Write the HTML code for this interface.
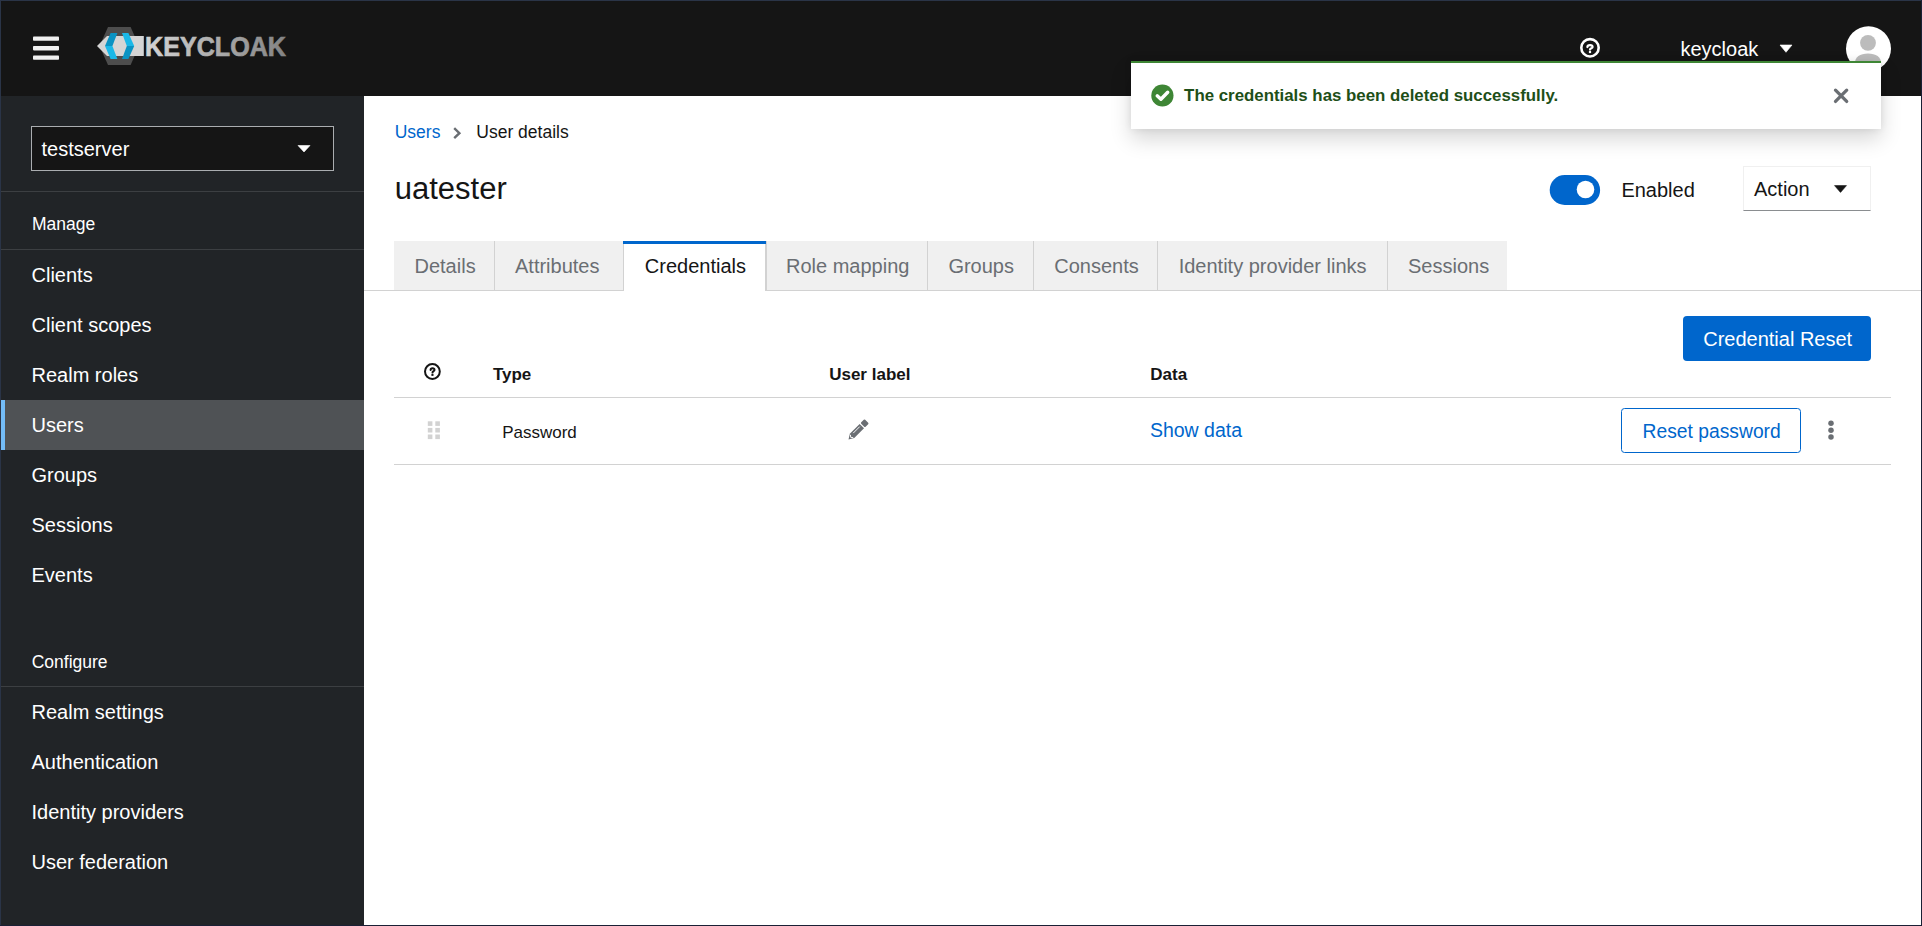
<!DOCTYPE html>
<html><head><meta charset="utf-8"><title>Keycloak</title>
<style>
html,body{margin:0;padding:0;}
body{width:1922px;height:926px;position:relative;overflow:hidden;background:#fff;font-family:"Liberation Sans", sans-serif;}
.t{position:absolute;white-space:nowrap;line-height:1;}
.r{position:absolute;}
.s{position:absolute;overflow:visible;}
</style></head><body>
<div class="r" style="left:0px;top:0px;width:1922px;height:96px;background:#151515;"></div>
<svg class="s" style="left:28px;top:30px;" width="36" height="36" viewBox="0 0 36 36"><rect x="5" y="6.4" width="26" height="4.4" rx="0.8" fill="#f0f0f0"/><rect x="5" y="16.0" width="26" height="4.4" rx="0.8" fill="#f0f0f0"/><rect x="5" y="25.4" width="26" height="4.4" rx="0.8" fill="#f0f0f0"/></svg>
<svg class="s" style="left:90px;top:20px;" width="200" height="52" viewBox="0 0 200 52">
<defs>
<linearGradient id="kg" x1="0" y1="0" x2="1" y2="0">
<stop offset="0" stop-color="#d4d4d4"/><stop offset="0.5" stop-color="#acacac"/><stop offset="1" stop-color="#838383"/>
</linearGradient>
</defs>
<polygon points="18,7 40.6,7 49,26 40.6,45 18,45 9.6,26" fill="#4d4d4d"/>
<polygon points="7,26 17,16 53.8,16 53.8,36 17,36" fill="#d5d5d5"/>
<polygon points="20.6,13 27.4,13 22.4,26 15,26" fill="#0a93c3"/>
<polygon points="15,26 22.4,26 27.4,39 20.6,39" fill="#1ab8e8"/>
<polygon points="32,13 38.4,13 44.2,26 36.8,26" fill="#1ab8e8"/>
<polygon points="36.8,26 44.2,26 38.4,39 32,39" fill="#0a93c3"/>
<text x="55" y="35.8" font-family="Liberation Sans" font-weight="700" font-size="27" fill="url(#kg)" stroke="url(#kg)" stroke-width="0.7" textLength="141" lengthAdjust="spacingAndGlyphs">KEYCLOAK</text>
</svg>
<svg class="s" style="left:1578px;top:36px;" width="24" height="24" viewBox="0 0 24 24"><circle cx="12" cy="11.8" r="8.7" fill="none" stroke="#fff" stroke-width="2.6"/>
<path d="M9.4 11.1 C9.4 8.4 14.6 8.4 14.6 11.1 C14.6 12.3 12 12.3 12 13.6" fill="none" stroke="#fff" stroke-width="2.2" stroke-linecap="round"/>
<rect x="10.9" y="14.9" width="2.2" height="2.2" fill="#fff"/></svg>
<div class="t" style="left:1680.50px;top:38.77px;font-size:20px;color:#fff;font-weight:400;">keycloak</div>
<svg class="s" style="left:1778px;top:43px;" width="16" height="12" viewBox="0 0 16 12"><path d="M2 2 L14 2 L8 9.3 Z" fill="#fff" stroke="#fff" stroke-width="0.6" stroke-linejoin="round"/></svg>
<svg class="s" style="left:1844px;top:24px;" width="50" height="50" viewBox="0 0 50 50"><defs><clipPath id="ac"><circle cx="24.5" cy="24.7" r="22.5"/></clipPath></defs>
<circle cx="24.5" cy="24.7" r="22.5" fill="#fff"/>
<g clip-path="url(#ac)"><circle cx="24" cy="18.8" r="7.9" fill="#bcbcbc"/>
<path d="M10.8 50 L10.8 40 C10.8 33 16 29.6 24 29.6 C32 29.6 37.2 33 37.2 40 L37.2 50 Z" fill="#bcbcbc"/></g></svg>
<div class="r" style="left:0px;top:96px;width:364px;height:830px;background:#212427;"></div>
<div class="r" style="left:31px;top:126px;width:303px;height:45px;background:#151515;box-sizing:border-box;border:1px solid #aaadb0;"></div>
<div class="t" style="left:41.50px;top:139.07px;font-size:20px;color:#fff;font-weight:400;">testserver</div>
<svg class="s" style="left:296px;top:143px;" width="16" height="12" viewBox="0 0 16 12"><path d="M2 2.5 L14 2.5 L8 9 Z" fill="#fff" stroke="#fff" stroke-width="0.6" stroke-linejoin="round"/></svg>
<div class="r" style="left:0px;top:191px;width:364px;height:1px;background:#3c3f42;"></div>
<div class="t" style="left:31.90px;top:216.49px;font-size:17.5px;color:#fff;font-weight:400;">Manage</div>
<div class="r" style="left:0px;top:249px;width:364px;height:1px;background:#3c3f42;"></div>
<div class="r" style="left:1px;top:400px;width:363px;height:50px;background:#4f5255;"></div>
<div class="r" style="left:1px;top:400px;width:4px;height:50px;background:#73bcf7;"></div>
<div class="t" style="left:31.50px;top:265.07px;font-size:20px;color:#fff;font-weight:400;">Clients</div>
<div class="t" style="left:31.50px;top:315.07px;font-size:20px;color:#fff;font-weight:400;">Client scopes</div>
<div class="t" style="left:31.50px;top:365.07px;font-size:20px;color:#fff;font-weight:400;">Realm roles</div>
<div class="t" style="left:31.50px;top:415.07px;font-size:20px;color:#fff;font-weight:400;">Users</div>
<div class="t" style="left:31.50px;top:465.07px;font-size:20px;color:#fff;font-weight:400;">Groups</div>
<div class="t" style="left:31.50px;top:515.07px;font-size:20px;color:#fff;font-weight:400;">Sessions</div>
<div class="t" style="left:31.50px;top:565.07px;font-size:20px;color:#fff;font-weight:400;">Events</div>
<div class="t" style="left:31.70px;top:654.19px;font-size:17.5px;color:#fff;font-weight:400;">Configure</div>
<div class="r" style="left:0px;top:686px;width:364px;height:1px;background:#3c3f42;"></div>
<div class="t" style="left:31.50px;top:702.07px;font-size:20px;color:#fff;font-weight:400;">Realm settings</div>
<div class="t" style="left:31.50px;top:752.07px;font-size:20px;color:#fff;font-weight:400;">Authentication</div>
<div class="t" style="left:31.50px;top:802.07px;font-size:20px;color:#fff;font-weight:400;">Identity providers</div>
<div class="t" style="left:31.50px;top:852.07px;font-size:20px;color:#fff;font-weight:400;">User federation</div>
<div class="t" style="left:394.70px;top:124.29px;font-size:17.5px;color:#0066cc;font-weight:400;">Users</div>
<svg class="s" style="left:450px;top:124.5px;" width="14" height="15" viewBox="0 0 14 15"><path d="M4.2 3.2 L9.4 8.2 L4.2 13.2" fill="none" stroke="#6a6e73" stroke-width="2.4"/></svg>
<div class="t" style="left:476.30px;top:124.29px;font-size:17.5px;color:#151515;font-weight:400;">User details</div>
<div class="t" style="left:394.70px;top:172.76px;font-size:31px;color:#151515;font-weight:400;">uatester</div>
<svg class="s" style="left:1548px;top:173px;" width="54" height="34" viewBox="0 0 54 34"><rect x="1.7" y="2" width="50.4" height="30" rx="15" fill="#0066cc"/><circle cx="37.5" cy="16.5" r="8.8" fill="#fff"/></svg>
<div class="t" style="left:1621.40px;top:180.17px;font-size:20px;color:#151515;font-weight:400;">Enabled</div>
<div class="r" style="left:1743px;top:166px;width:128px;height:45px;background:#fff;box-sizing:border-box;border:1px solid #f0f0f0;border-bottom-color:#8a8d90;"></div>
<div class="t" style="left:1754.00px;top:179.37px;font-size:20px;color:#151515;font-weight:400;">Action</div>
<svg class="s" style="left:1832px;top:183px;" width="16" height="12" viewBox="0 0 16 12"><path d="M2.5 2.6 L14.5 2.6 L8.5 9.4 Z" fill="#151515" stroke="#151515" stroke-width="0.6" stroke-linejoin="round"/></svg>
<div class="r" style="left:364px;top:290px;width:1558px;height:1px;background:#d2d2d2;"></div>
<div class="r" style="left:394px;top:241px;width:1113px;height:49px;background:#f0f0f0;"></div>
<div class="r" style="left:494px;top:241px;width:1px;height:49px;background:#d2d2d2;"></div>
<div class="r" style="left:623px;top:241px;width:1px;height:49px;background:#d2d2d2;"></div>
<div class="r" style="left:766px;top:241px;width:1px;height:49px;background:#d2d2d2;"></div>
<div class="r" style="left:927px;top:241px;width:1px;height:49px;background:#d2d2d2;"></div>
<div class="r" style="left:1033px;top:241px;width:1px;height:49px;background:#d2d2d2;"></div>
<div class="r" style="left:1157px;top:241px;width:1px;height:49px;background:#d2d2d2;"></div>
<div class="r" style="left:1387px;top:241px;width:1px;height:49px;background:#d2d2d2;"></div>
<div class="r" style="left:623px;top:241px;width:143px;height:50px;background:#fff;box-sizing:border-box;border-left:1px solid #d2d2d2;border-right:1px solid #d2d2d2;"></div>
<div class="r" style="left:623px;top:241px;width:143px;height:3px;background:#0066cc;"></div>
<div class="t" style="left:414.50px;top:256.17px;font-size:20px;color:#6a6e73;font-weight:400;">Details</div>
<div class="t" style="left:515.00px;top:256.17px;font-size:20px;color:#6a6e73;font-weight:400;">Attributes</div>
<div class="t" style="left:644.80px;top:256.17px;font-size:20px;color:#151515;font-weight:400;">Credentials</div>
<div class="t" style="left:786.00px;top:256.17px;font-size:20px;color:#6a6e73;font-weight:400;">Role mapping</div>
<div class="t" style="left:948.40px;top:256.17px;font-size:20px;color:#6a6e73;font-weight:400;">Groups</div>
<div class="t" style="left:1054.30px;top:256.17px;font-size:20px;color:#6a6e73;font-weight:400;">Consents</div>
<div class="t" style="left:1178.70px;top:256.17px;font-size:20px;color:#6a6e73;font-weight:400;">Identity provider links</div>
<div class="t" style="left:1408.00px;top:256.17px;font-size:20px;color:#6a6e73;font-weight:400;">Sessions</div>
<div class="r" style="left:1683px;top:316px;width:188px;height:45px;background:#0066cc;border-radius:4px;"></div>
<div class="t" style="left:1703.20px;top:328.97px;font-size:20px;color:#fff;font-weight:400;">Credential Reset</div>
<svg class="s" style="left:422px;top:361px;" width="21" height="21" viewBox="0 0 21 21"><circle cx="10.4" cy="10.5" r="7.4" fill="none" stroke="#151515" stroke-width="2"/>
<path d="M8.6 8.9 C8.6 6.7 12.5 6.7 12.5 8.9 C12.5 10.1 10.5 10.1 10.5 11.6" fill="none" stroke="#151515" stroke-width="2" stroke-linecap="round"/>
<rect x="9.4" y="12.8" width="2.1" height="2.1" fill="#151515"/></svg>
<div class="t" style="left:492.90px;top:366.41px;font-size:17px;color:#151515;font-weight:700;">Type</div>
<div class="t" style="left:829.20px;top:366.21px;font-size:17px;color:#151515;font-weight:700;">User label</div>
<div class="t" style="left:1150.30px;top:366.21px;font-size:17px;color:#151515;font-weight:700;">Data</div>
<div class="r" style="left:394px;top:397px;width:1497px;height:1px;background:#d2d2d2;"></div>
<svg class="s" style="left:426px;top:419px;" width="16" height="22" viewBox="0 0 16 22"><rect x="1.8" y="2.3" width="4.6" height="4.6" fill="#d2d2d2"/><rect x="1.8" y="8.9" width="4.6" height="4.6" fill="#d2d2d2"/><rect x="1.8" y="15.5" width="4.6" height="4.6" fill="#d2d2d2"/><rect x="9.3" y="2.3" width="4.6" height="4.6" fill="#d2d2d2"/><rect x="9.3" y="8.9" width="4.6" height="4.6" fill="#d2d2d2"/><rect x="9.3" y="15.5" width="4.6" height="4.6" fill="#d2d2d2"/></svg>
<div class="t" style="left:502.20px;top:423.71px;font-size:17px;color:#151515;font-weight:400;">Password</div>
<svg class="s" style="left:840px;top:412px;" width="36" height="36" viewBox="0 0 36 36"><g transform="translate(8.5 27.4) rotate(-45)">
<path d="M0 0 L5 -3.1 L18.8 -3.1 L18.8 3.1 L5 3.1 Z" fill="#6a6e73"/>
<rect x="20.1" y="-3.1" width="5.6" height="6.2" rx="1" fill="#6a6e73"/>
<path d="M7.8 -1.1 L17 -1.1" stroke="#fff" stroke-width="0.9"/>
<path d="M4.6 -1.9 L3 0.1 L4.6 2.1" fill="none" stroke="#fff" stroke-width="0.9"/>
</g></svg>
<div class="t" style="left:1149.90px;top:421.09px;font-size:19.5px;color:#0066cc;font-weight:400;">Show data</div>
<div class="r" style="left:1621px;top:408px;width:180px;height:45px;background:#fff;box-sizing:border-box;border:1px solid #0066cc;border-radius:3.5px;"></div>
<div class="t" style="left:1642.50px;top:421.56px;font-size:19.3px;color:#0066cc;font-weight:400;">Reset password</div>
<svg class="s" style="left:1825px;top:417px;" width="12" height="26" viewBox="0 0 12 26"><circle cx="6" cy="6.3" r="2.75" fill="#6a6e73"/><circle cx="6" cy="13.2" r="2.75" fill="#6a6e73"/><circle cx="6" cy="20.1" r="2.75" fill="#6a6e73"/></svg>
<div class="r" style="left:394px;top:464px;width:1497px;height:1px;background:#d2d2d2;"></div>
<div class="r" style="left:1131px;top:61px;width:750px;height:68px;background:#fff;border-top:2px solid #3e8635;box-sizing:border-box;box-shadow:0 10px 20px 0 rgba(3,3,3,.16),0 0 7.5px 0 rgba(3,3,3,.08);"></div>
<svg class="s" style="left:1149px;top:82px;" width="27" height="27" viewBox="0 0 27 27"><circle cx="13.4" cy="13.5" r="11.1" fill="#3e8635"/><path d="M8.2 13.8 L11.9 17.3 L18.7 10.2" fill="none" stroke="#fff" stroke-width="3.4" stroke-linecap="round" stroke-linejoin="round"/></svg>
<div class="t" style="left:1184.10px;top:87.54px;font-size:16.85px;color:#1e4f18;font-weight:700;">The credentials has been deleted successfully.</div>
<svg class="s" style="left:1831px;top:86px;" width="20" height="20" viewBox="0 0 20 20"><path d="M4.5 4.2 L15.7 15.4 M15.7 4.2 L4.5 15.4" stroke="#6a6e73" stroke-width="3.3" stroke-linecap="round"/></svg>
<div class="r" style="left:0px;top:0px;width:1922px;height:1px;background:#2a3447;"></div>
<div class="r" style="left:0px;top:0px;width:1px;height:926px;background:#2a3447;"></div>
<div class="r" style="left:1921px;top:0px;width:1px;height:926px;background:#1a2035;"></div>
<div class="r" style="left:0px;top:925px;width:1922px;height:1px;background:#1a2035;"></div>
</body></html>
